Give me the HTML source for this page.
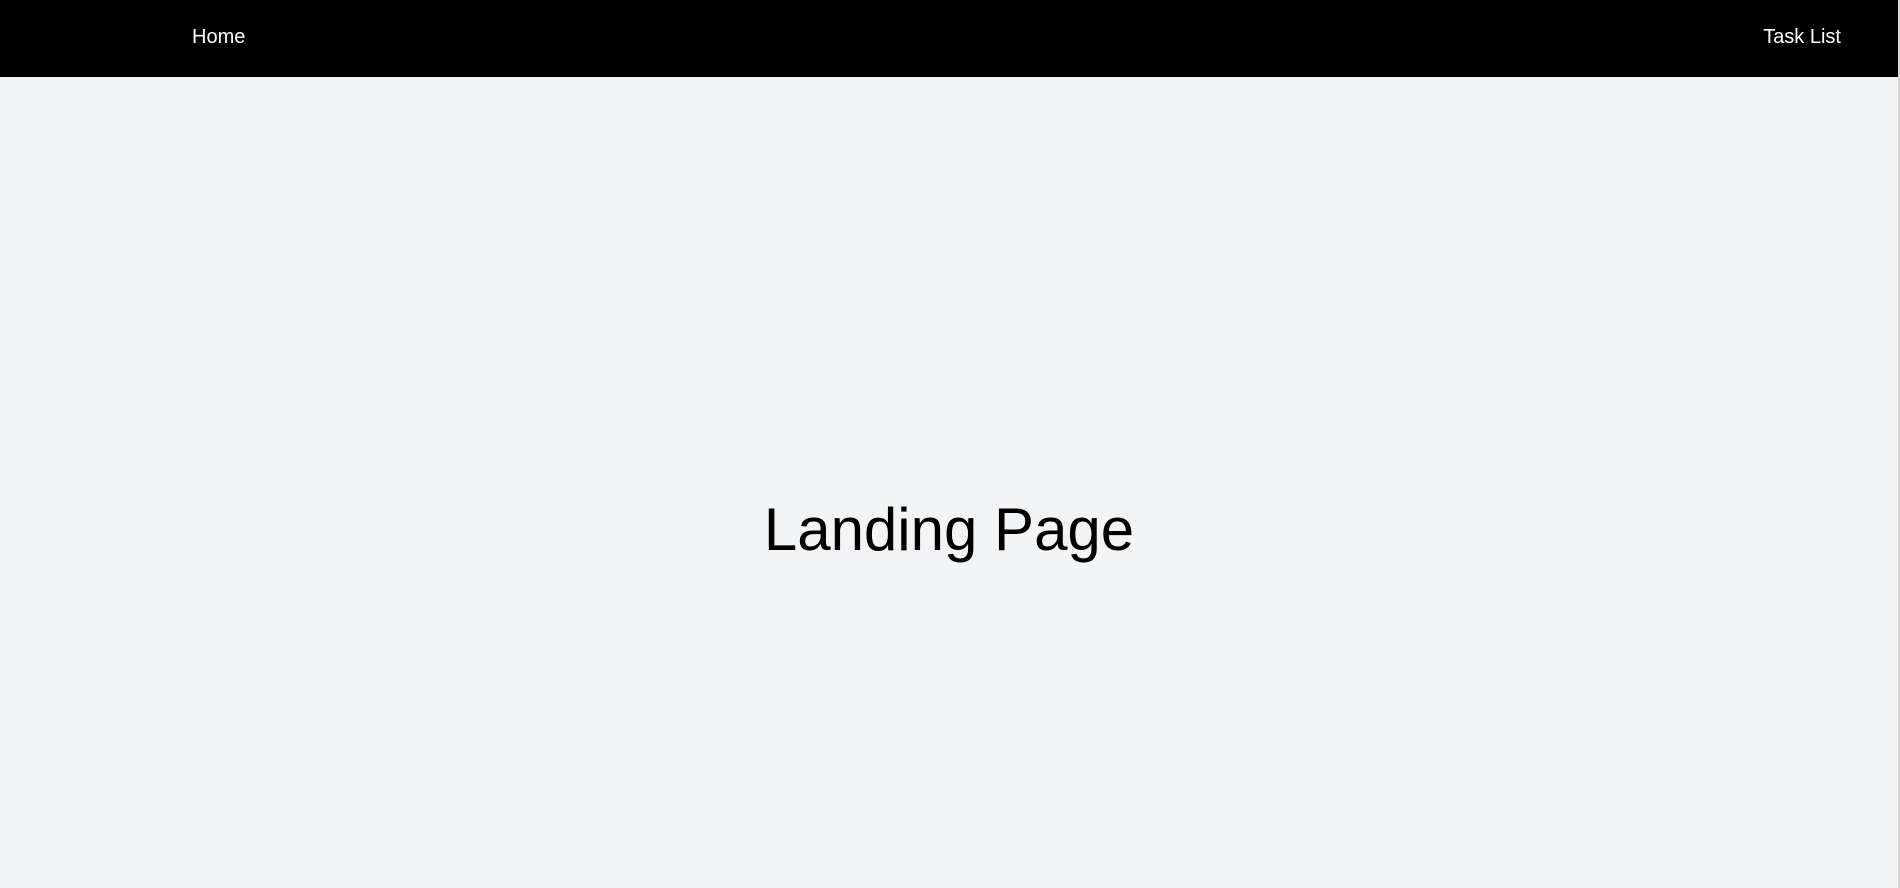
<!DOCTYPE html>
<html><head><style>
html,body{margin:0;padding:0;width:1900px;height:888px;overflow:hidden;background:#f3f4f6;font-family:"Liberation Sans",Arial,sans-serif}
.nav{position:absolute;left:0;top:0;width:1898px;height:77px;background:#000;color:#fff;font-size:20px}
.nav span{position:absolute;top:26px}
.edge{position:absolute;right:0;top:0;width:2px;height:888px;background:#d8d8d8}
h1{position:absolute;left:0;width:1898px;top:494px;margin:0;text-align:center;font-weight:400;font-size:60px;color:#000;line-height:72px}
</style></head><body>
<div class="nav"><span style="left:192px">Home</span><span style="right:57px">Task List</span></div>
<div class="edge"></div>
<h1>Landing Page</h1>
</body></html>
